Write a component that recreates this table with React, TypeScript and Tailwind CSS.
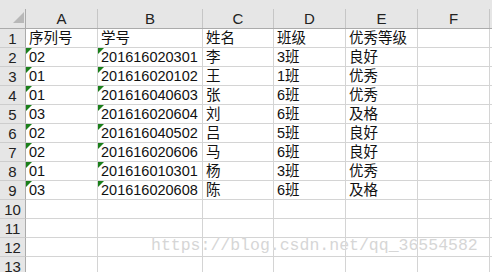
import React from "react";

const COLS = ["A", "B", "C", "D", "E", "F"];
const WIDTHS = ["w-[72px]", "w-[105px]", "w-[71px]", "w-[72px]", "w-[72px]", "w-[72px]"];

const rows: string[][] = [
  ["序列号", "学号", "姓名", "班级", "优秀等级", ""],
  ["02", "201616020301", "李", "3班", "良好", ""],
  ["01", "201616020102", "王", "1班", "优秀", ""],
  ["01", "201616040603", "张", "6班", "优秀", ""],
  ["03", "201616020604", "刘", "6班", "及格", ""],
  ["02", "201616040502", "吕", "5班", "良好", ""],
  ["02", "201616020606", "马", "6班", "良好", ""],
  ["01", "201616010301", "杨", "3班", "优秀", ""],
  ["03", "201616020608", "陈", "6班", "及格", ""],
  ["", "", "", "", "", ""],
  ["", "", "", "", "", ""],
  ["", "", "", "", "", ""],
  ["", "", "", "", "", ""],
];

const font = { fontFamily: '"Liberation Sans", "Noto Sans CJK SC", sans-serif' };

function Flag() {
  // green "number stored as text" marker
  return (
    <svg className="absolute left-0 top-0" width="6" height="6" viewBox="0 0 6 6">
      <polygon points="0,0 6,0 0,6" fill="#1a7f1a" />
    </svg>
  );
}

export default function App() {
  return (
    <div className="w-[492px] h-[272px] overflow-hidden bg-white text-[#111]" style={font}>
      <div className="h-[9px] bg-[#e6e6e6]" />
      {/* column headers */}
      <div className="flex h-[20px] bg-[#e6e6e6] border-b border-[#ababab]">
        <div className="relative w-[26px] shrink-0 border-r border-[#ababab]">
          <svg className="absolute left-[13px] top-[3px]" width="11" height="11" viewBox="0 0 11 11">
            <polygon points="0,11 11,0 11,11" fill="#b8b8b8" />
          </svg>
        </div>
        {COLS.map((c, i) => (
          <div
            key={c}
            className={`${WIDTHS[i]} shrink-0 border-r border-[#c6c6c6] flex items-end justify-center pb-[1px] text-[15px] leading-[17px] text-[#222]`}
          >
            {c}
          </div>
        ))}
        <div className="flex-1" />
      </div>
      {rows.map((r, ri) => (
        <div key={ri} className="flex h-[19px]">
          <div className="w-[26px] shrink-0 bg-[#e6e6e6] border-r border-b border-[#ababab] border-b-[#cdcdcd] flex items-end justify-center text-[15px] leading-[17px] text-[#222]">
            {ri + 1}
          </div>
          {r.map((v, ci) => (
            <div
              key={ci}
              className={`${WIDTHS[ci]} relative shrink-0 border-r border-b border-[#d4d4d4] flex items-end pl-[3px] text-[14.5px] leading-[17px] whitespace-nowrap`}
            >
              {(ci === 0 || ci === 1) && ri >= 1 && ri <= 8 ? <Flag /> : null}
              {v}
            </div>
          ))}
          <div className="flex-1 border-b border-[#d4d4d4]" />
        </div>
      ))}
      <div
        className="absolute left-[151px] top-[236px] text-[16.5px] leading-[20px] text-[#d6d6d6] whitespace-nowrap"
        style={{ fontFamily: '"Liberation Mono", monospace', textShadow: "0 0 1px #fff" }}
      >
        https://blog.csdn.net/qq_36554582
      </div>
    </div>
  );
}
